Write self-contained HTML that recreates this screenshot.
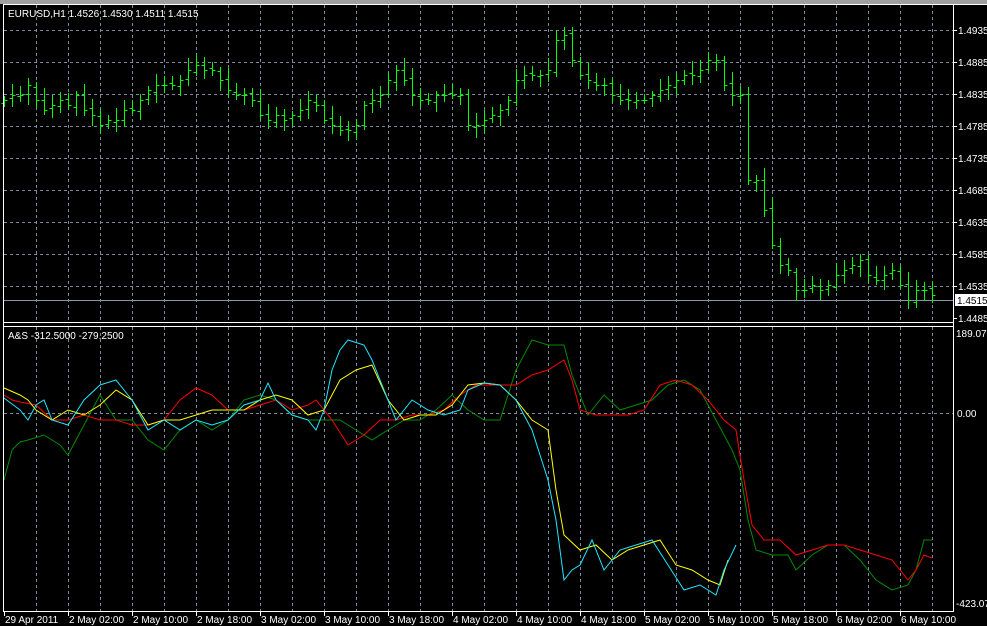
<!DOCTYPE html>
<html><head><meta charset="utf-8"><style>
html,body{margin:0;padding:0;background:#000;width:987px;height:626px;overflow:hidden}
svg{display:block}
text{font-family:"Liberation Sans",sans-serif;font-size:10px;fill:#fff}
</style></head><body>
<svg id="s" width="987" height="626" xmlns="http://www.w3.org/2000/svg">
<rect width="987" height="626" fill="#000"/>
<rect x="0" y="0" width="987" height="4" fill="#a0a0a0"/>
<g id="grid" stroke="#7a8aa0" stroke-dasharray="3,3" stroke-width="1"></g>
<line x1="4" y1="300.5" x2="953" y2="300.5" stroke="#8898a8"/>
<g id="bars" stroke="#00ff00" stroke-width="1" fill="none"></g>
<g id="ind" fill="none" stroke-width="1"></g>
<line x1="3.5" y1="4" x2="3.5" y2="612" stroke="#fff"/>
<line x1="3" y1="4.5" x2="987" y2="4.5" stroke="#fff"/>
<line x1="3" y1="322.5" x2="953" y2="322.5" stroke="#fff"/>
<line x1="3" y1="326.5" x2="953" y2="326.5" stroke="#fff"/>
<line x1="953.5" y1="4" x2="953.5" y2="612" stroke="#fff"/>
<line x1="3" y1="611.5" x2="954" y2="611.5" stroke="#fff"/>
<text x="8" y="17">EURUSD,H1  1.4526 1.4530 1.4511 1.4515</text>
<text x="8" y="339">A&amp;S -312.5000 -279.2500</text>
<g id="axis"></g>
<rect x="955" y="294" width="32" height="12" fill="#fff"/>
<text x="957" y="304" style="fill:#000">1.4515</text>
<text x="956" y="337">189.075</text>
<text x="957" y="417">0.00</text>
<text x="956" y="607">-423.07</text>
</svg>
<script>
var NS="http://www.w3.org/2000/svg";
function el(p,t,a,tx){var e=document.createElementNS(NS,t);for(var k in a)e.setAttribute(k,a[k]);if(tx)e.textContent=tx;document.getElementById(p).appendChild(e);return e;}
for(var x=36;x<953;x+=32){el('grid','line',{x1:x+.5,y1:5,x2:x+.5,y2:322});el('grid','line',{x1:x+.5,y1:327,x2:x+.5,y2:611});}
var prices=["1.4935","1.4885","1.4835","1.4785","1.4735","1.4685","1.4635","1.4585","1.4535","1.4485"];
for(var i=0;i<10;i++){var y=30+i*32;if(i<9)el('grid','line',{x1:4,y1:y+.5,x2:953,y2:y+.5});el('axis','line',{x1:953,y1:y+.5,x2:957,y2:y+.5,stroke:'#fff'});el('axis','text',{x:958,y:y+4},prices[i]);}
el('grid','line',{x1:4,y1:413.5,x2:953,y2:413.5});
var labels=["29 Apr 2011","2 May 02:00","2 May 10:00","2 May 18:00","3 May 02:00","3 May 10:00","3 May 18:00","4 May 02:00","4 May 10:00","4 May 18:00","5 May 02:00","5 May 10:00","5 May 18:00","6 May 02:00","6 May 10:00"];
for(var i=0;i<labels.length;i++){var x=4+i*64;el('axis','line',{x1:x+.5,y1:611,x2:x+.5,y2:616,stroke:'#fff'});el('axis','text',{x:x+1,y:623},labels[i]);}
var c=[100,95,95,85,100,110,105,100,105,95,110,115,125,120,120,110,110,100,90,85,85,85,80,70,65,70,70,80,90,95,95,100,115,120,115,120,115,110,100,105,120,125,130,130,125,105,100,95,80,70,80,95,100,100,95,95,95,95,125,125,120,115,110,100,80,75,75,75,70,40,35,60,75,80,85,85,95,100,100,100,100,95,90,85,80,75,75,70,60,60,85,95,95,180,180,210,245,265,270,290,290,285,290,285,275,270,265,260,275,280,275,270,285,300,290,290,295];
var d="";var prev=c[0]+3;
for(var i=0;i<c.length;i++){var x=4+i*8+.5;var o=prev,cl=c[i];var hi=Math.min(o,cl)-4-((i*7)%9),lo=Math.max(o,cl)+4+((i*5)%8);
d+="M"+x+" "+hi+"V"+lo+"M"+(x-3)+" "+(o+.5)+"H"+x+"M"+x+" "+(cl+.5)+"H"+(x+3);prev=cl+((i*3)%5)-2;}
el('bars','path',{d:d});
function line(col,pts){var s="";for(var i=0;i<pts.length;i+=2)s+=(i?"L":"M")+pts[i]+" "+pts[i+1];el('ind','path',{d:s,stroke:col});}
line('#008c00',[4,480,12,450,20,442,28,440,44,435,60,445,68,455,76,440,92,410,100,395,116,420,132,420,148,440,164,450,180,430,196,420,212,430,228,420,244,400,260,395,276,400,292,415,308,420,324,420,340,420,356,430,372,440,388,430,404,420,420,420,436,410,452,395,468,410,484,420,500,420,516,370,532,340,548,345,564,345,572,375,588,415,604,395,620,410,636,405,652,400,668,385,684,380,700,390,716,420,732,450,740,470,748,520,756,550,772,555,788,555,796,570,812,555,828,545,844,545,860,560,876,580,892,590,908,585,916,570,924,540,932,540]);
line('#ff0000',[4,395,12,400,20,402,36,405,52,420,68,420,84,415,100,420,116,420,132,425,148,425,164,420,180,400,196,388,212,395,228,410,244,410,260,405,276,400,292,410,308,405,316,400,332,420,348,445,364,435,380,420,396,420,412,415,428,415,444,410,460,395,476,385,500,385,516,385,532,375,548,370,564,360,572,380,580,410,596,415,612,415,628,415,644,410,660,385,676,380,692,385,708,400,724,420,736,430,744,480,752,525,764,540,780,540,796,555,812,550,828,545,844,545,860,550,876,555,892,560,908,580,916,570,924,555,932,558]);
line('#ffff00',[4,388,20,395,28,400,36,410,52,420,68,410,84,415,100,405,116,390,132,400,148,425,164,420,180,420,196,415,212,410,228,410,244,410,260,400,276,395,292,400,308,415,324,410,340,380,356,370,372,365,388,400,404,420,420,415,436,415,452,405,468,385,484,383,500,385,516,400,532,420,548,430,556,490,564,535,580,550,596,545,612,560,628,550,644,545,660,540,676,565,692,570,708,580,720,585,728,560]);
line('#20e8ff',[4,398,20,410,28,420,36,405,44,400,52,420,68,425,84,400,100,385,116,380,132,400,148,430,164,420,180,430,196,420,212,425,228,420,244,405,260,400,268,383,276,400,292,415,308,420,316,430,324,410,332,370,340,350,348,340,364,345,372,360,380,380,396,420,412,400,428,410,444,415,460,410,468,390,484,383,500,385,516,400,532,430,548,480,556,520,564,580,572,570,580,565,592,540,604,570,620,550,636,545,652,540,668,565,684,590,700,585,716,595,724,570,736,545]);
</script>
</body></html>
